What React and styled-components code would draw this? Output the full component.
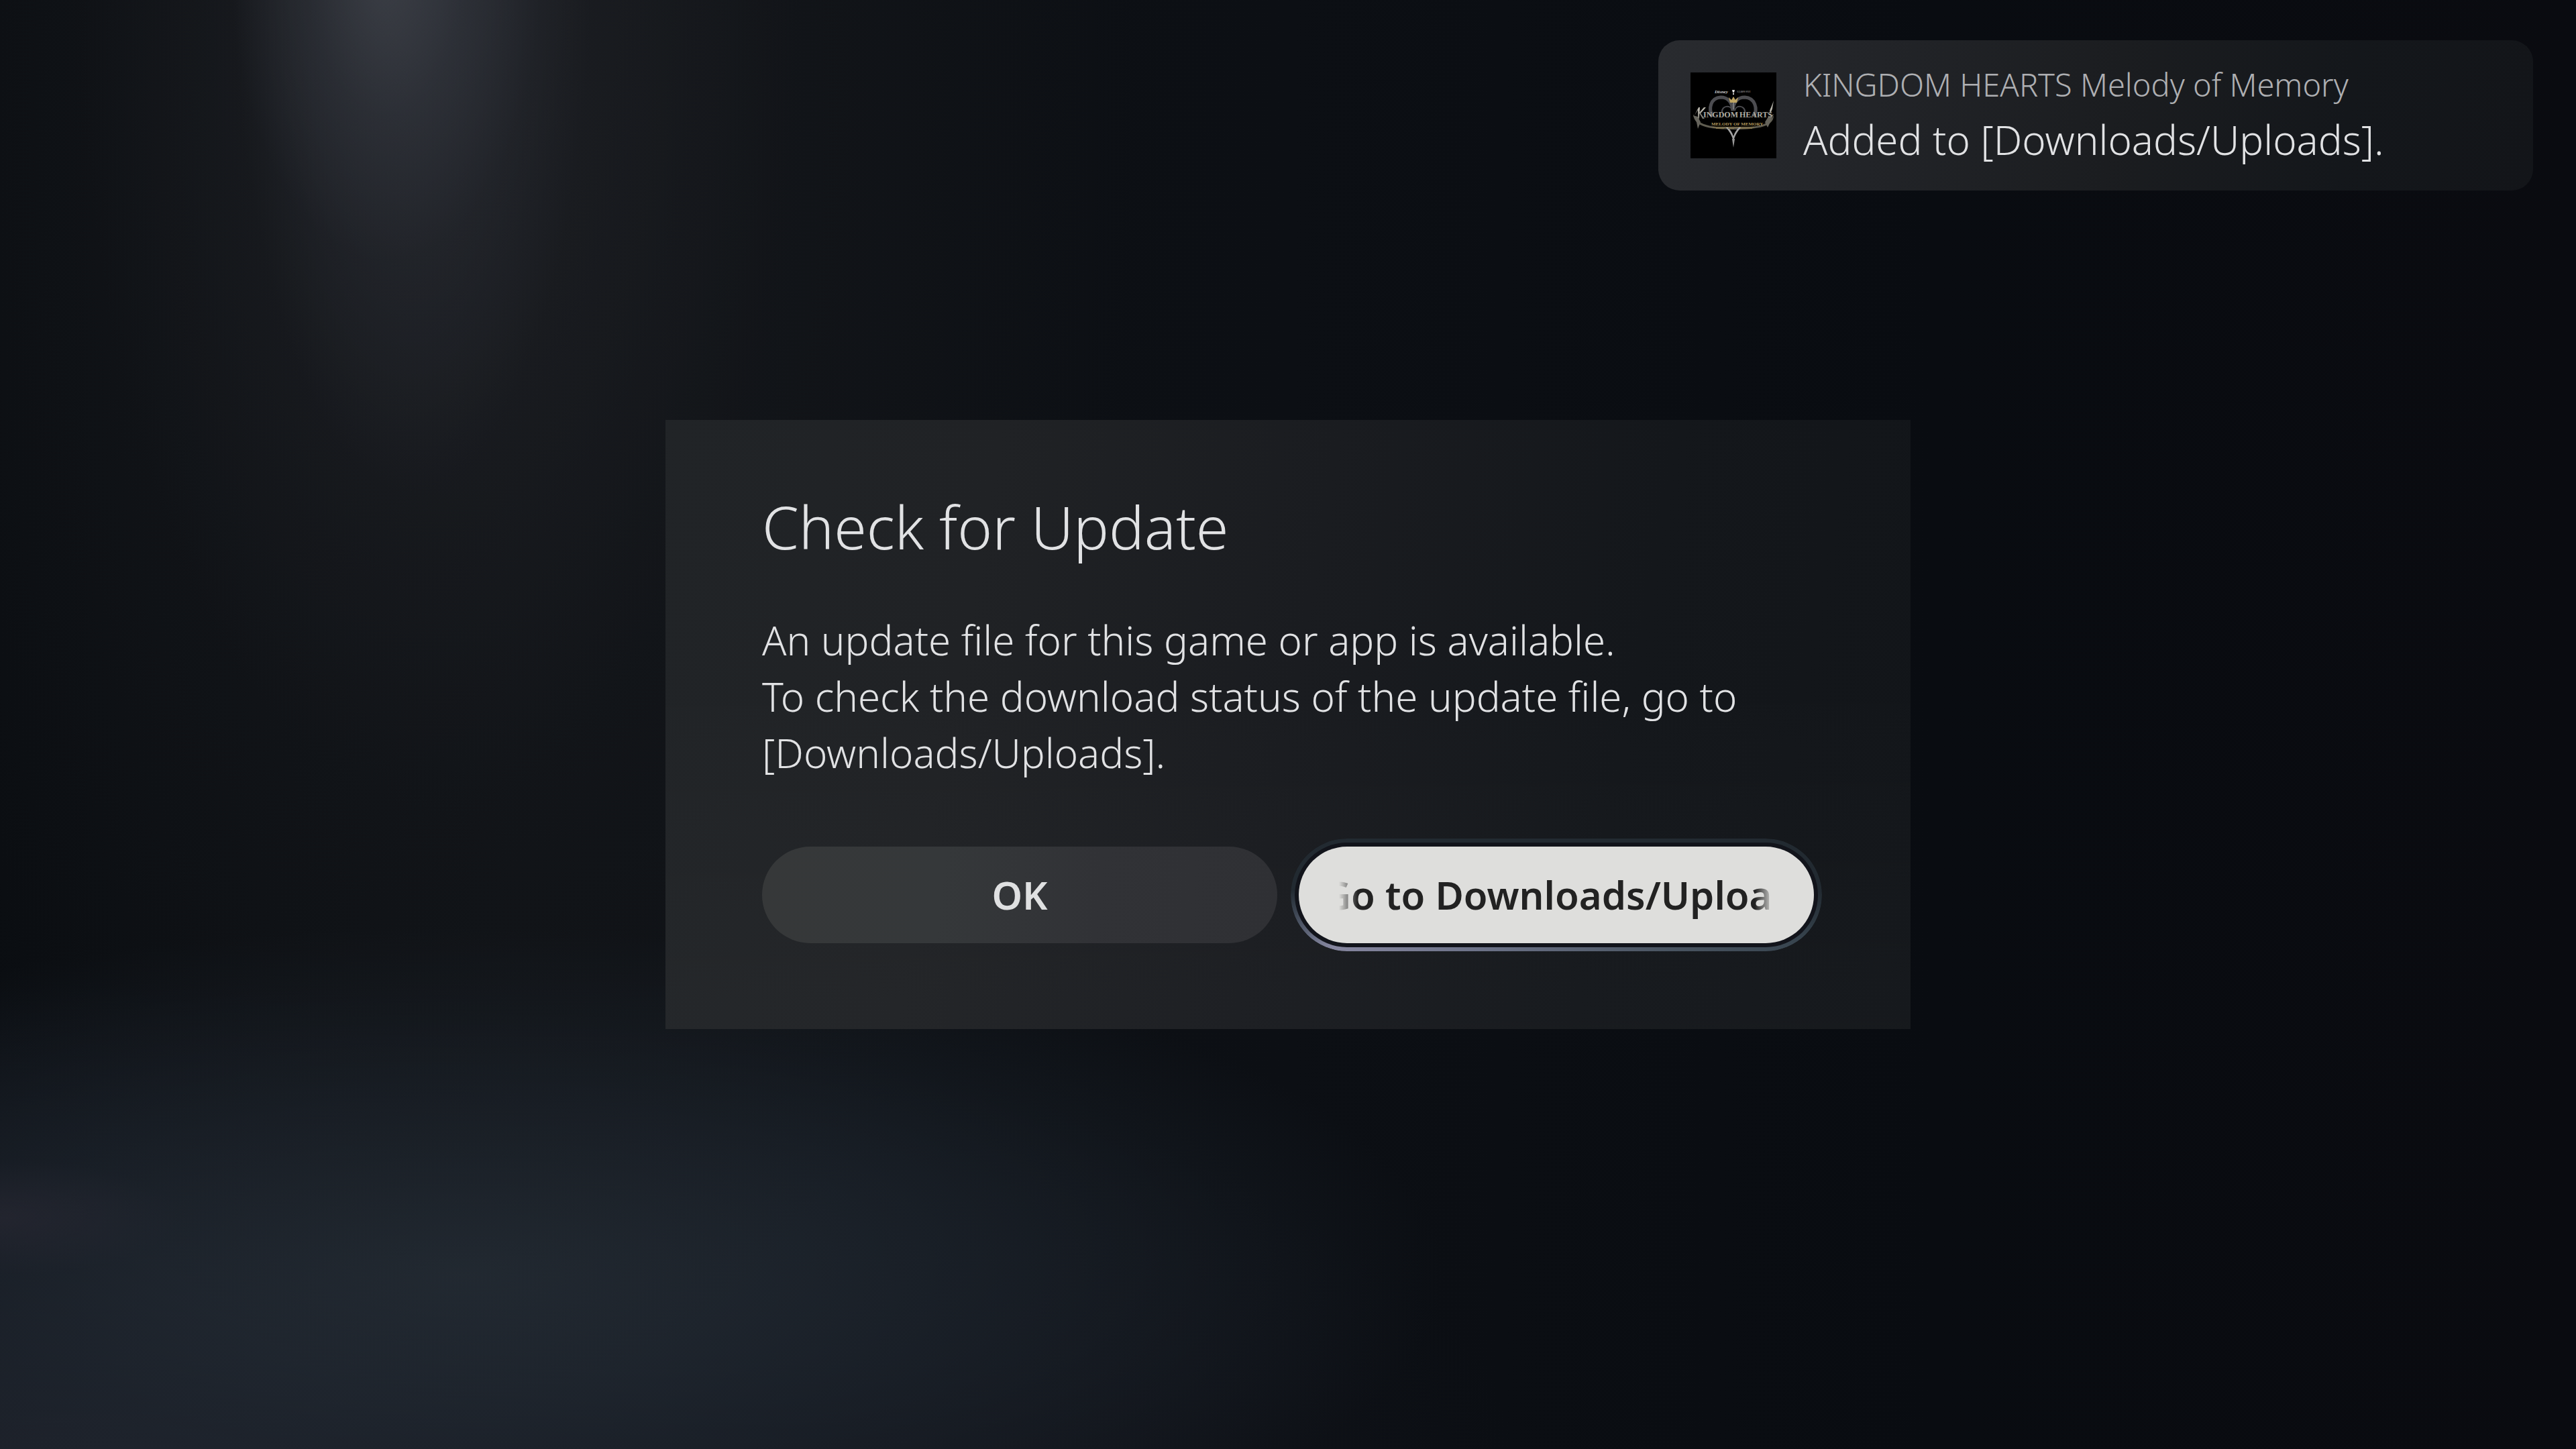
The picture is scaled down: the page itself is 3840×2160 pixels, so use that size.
import React from "react";
import styled, { createGlobalStyle, css } from "styled-components";

const GlobalStyle = createGlobalStyle`
  *, *::before, *::after { box-sizing: border-box; }
  body {
    margin: 0;
    background: #090c11;
    color: #e1e2e4;
    font-family: "Noto Sans", "Open Sans", sans-serif;
    font-weight: 300;
  }
  h1, h2, p { margin: 0; font-weight: inherit; }
`;

const Screen = styled.main`
  position: relative;
  min-height: 100vh;
  display: grid;
  place-items: center;
  overflow: hidden;
  background:
    radial-gradient(ellipse 7% 4% at 0% 84%, rgba(44, 42, 54, 0.5), rgba(44, 42, 54, 0)),
    radial-gradient(ellipse 6% 20% at 15% -2%, rgba(78, 82, 90, 0.5), rgba(60, 64, 72, 0.3) 50%, rgba(50, 54, 62, 0)),
    radial-gradient(ellipse 7% 38% at 16% -4%, rgba(46, 49, 57, 0.6) 20%, rgba(40, 43, 50, 0.4) 65%, rgba(36, 39, 46, 0)),
    radial-gradient(ellipse 14% 58% at 17% -2%, rgba(36, 38, 44, 0.5), rgba(32, 35, 44, 0)),
    radial-gradient(ellipse 26% 90% at 18% 8%, rgba(30, 31, 34, 0.6), rgba(24, 26, 30, 0.4) 50%, rgba(20, 22, 26, 0)),
    radial-gradient(ellipse 38% 24% at 18% 88%, rgba(38, 47, 56, 0.8), rgba(30, 38, 47, 0.6) 50%, rgba(20, 26, 36, 0)),
    radial-gradient(ellipse 54% 34% at 5% 102%, rgba(34, 36, 46, 0.9), rgba(26, 28, 38, 0.5) 50%, rgba(20, 24, 34, 0)),
    linear-gradient(90deg, #0a0d11 0%, #0e1115 20%, #0c0f14 50%, #090c11 75%, #0a0b10 100%);
`;

const Toast = styled.aside`
  position: absolute;
  top: 60px;
  right: 64px;
  width: 1304px;
  max-width: calc(100% - 128px);
  min-height: 224px;
  padding: 0 48px;
  display: flex;
  align-items: center;
  gap: 40px;
  border-radius: 32px;
  background: linear-gradient(98deg, #292b2f 0%, #222428 25%, #1b1d20 52%, #14171b 78%, #131519 100%);
`;

const Artwork = styled.svg`
  width: 128px;
  height: 128px;
  flex: none;
  background: #000;
`;

const ToastText = styled.div`
  display: grid;
  gap: 16px;
  white-space: nowrap;
`;

const ToastTitle = styled.p`
  font-size: 47px;
  line-height: 56px;
  color: #aeafb2;
`;

const ToastMessage = styled.p`
  font-size: 60px;
  line-height: 76px;
`;

const Dialog = styled.section`
  width: 1856px;
  max-width: calc(100% - 128px);
  padding: 100px 144px 128px;
  background:
    linear-gradient(180deg, transparent 40%, rgba(255, 255, 255, 0.02)),
    linear-gradient(100deg, #212427 0%, #202225 25%, #1a1c20 50%, #14171b 75%, #121519 100%);
`;

const Heading = styled.h1`
  font-size: 88px;
  line-height: 118px;
`;

const Message = styled.p`
  margin-top: 68px;
  font-size: 60px;
  line-height: 84px;
`;

const Actions = styled.div`
  margin-top: 98px;
  display: grid;
  grid-template-columns: 1fr 1fr;
  gap: 32px;
`;

const focusRing = css`
  &::before {
    content: "";
    position: absolute;
    inset: -12px;
    padding: 6px;
    border-radius: 84px;
    background:
      linear-gradient(180deg, #222a31 0%, #222a31 45%, transparent 92%),
      linear-gradient(90deg, #5a6478 0%, #86869f 8%, #6c7288 35%, #4a5562 70%, #35424c 100%);
    mask: linear-gradient(#000 0 0) content-box exclude, linear-gradient(#000 0 0);
  }
  &::after {
    content: "";
    position: absolute;
    inset: -6px;
    z-index: -1;
    border-radius: 78px;
    background: #12141b;
  }
`;

const Button = styled.button`
  position: relative;
  isolation: isolate;
  height: 144px;
  min-width: 0;
  padding: 0;
  border: 0;
  border-radius: 72px;
  outline: 0;
  font: 600 58px/84px "Noto Sans", "Open Sans", sans-serif;
  color: #dfe0e1;
  background: linear-gradient(95deg, #363839 0%, #35383a 35%, #313236 65%, #2f3034 100%);
  cursor: pointer;

  ${(p) => p.$focused && css`
    color: #222222;
    background: none;
    ${focusRing}
  `}
`;

const Face = styled.span`
  height: 100%;
  padding: 0 60px;
  display: flex;
  align-items: center;
  border-radius: 72px;
  background: #dededc;
`;

const Marquee = styled.span`
  flex: 1;
  min-width: 0;
  overflow: hidden;
  text-align: left;
  white-space: nowrap;
  text-indent: ${(p) => -p.$scrolled}px;
  mask-image: linear-gradient(90deg, transparent, #000 28px, #000 calc(100% - 28px), transparent);
`;

function GameArtwork() {
  return (
    <Artwork viewBox="0 0 128 128" role="img" aria-label="KINGDOM HEARTS Melody of Memory">
      <defs>
        <linearGradient id="silver" x1="0" y1="0" x2="0" y2="1">
          <stop offset="0" stopColor="#8b8a84" />
          <stop offset="0.5" stopColor="#bdbab0" />
          <stop offset="1" stopColor="#77756b" />
        </linearGradient>
      </defs>
      <text x="36" y="31" fontFamily="Liberation Serif, serif" fontStyle="italic" fontWeight="700" fontSize="7" fill="#d0d0d0">Disney</text>
      <path d="M62 26h4l-1 4h-2zM63 31h2v2h-2z" fill="#dcdcdc" />
      <text x="69" y="30" fontFamily="Liberation Sans, sans-serif" fontSize="3" fill="#9a9a9a">SQUARE ENIX</text>
      <g fill="none" stroke="#4c4c50">
        <path d="M33 66C26 54 30 38 45 37c10 0 17 7 18 20 1-13 8-20 18-20 15 1 20 17 13 29" strokeWidth="5" />
        <path d="M47 59c-1-9 13-12 15-2M81 59c1-9-13-12-15-2" strokeWidth="2" />
      </g>
      <path d="M4 62c6 16 25 20 60 20s53-3 60-18c0 16-21 21-60 21S5 80 4 62z" fill="#5f5c50" />
      <path d="M4 64l7 2 4 8-4 10-2-10zM124 62l-8 4-5 8 4 8 4-8z" fill="#66645c" />
      <path d="M52 81c5 6 10 12 12 22 2-10 7-16 12-22l-3 0c-4 4-7 8-9 14-2-6-5-10-9-14z" fill="#a5a5a5" />
      <path d="M62 99l2 13 2-13z" fill="#989898" />
      <path d="M57 37l4 4 3-5 3 5 4-4-2 8H59z" fill="#bfa562" />
      <path d="M63 45h2v10h-2z" fill="#77777a" />
      <path d="M7 62l5-10 2 0-1 17-2-1 0-12-5 8zM13 60l7-8 3 0-8 9 6 8-3 0zM118 57l6-15-2 12-3 8z" fill="url(#silver)" />
      <g fontFamily="Liberation Serif, serif" fontWeight="700" fontSize="12" fill="url(#silver)">
        <text x="19" y="67">INGDOM</text>
        <text x="73" y="67">HEARTS</text>
      </g>
      <text x="31" y="79" fontFamily="Liberation Serif, serif" fontWeight="700" fontSize="7" fill="#b39a5c">MELODY OF MEMORY</text>
      <path d="M33 81h62v1H33zM38 83h12v1H38zM56 83h9v1h-9zM74 83h18v1H74z" fill="#8d7a4b" />
    </Artwork>
  );
}

export default function App() {
  return (
    <>
      <GlobalStyle />
      <Screen>
        <Toast role="status">
          <GameArtwork />
          <ToastText>
            <ToastTitle>KINGDOM HEARTS Melody of Memory</ToastTitle>
            <ToastMessage>Added to [Downloads/Uploads].</ToastMessage>
          </ToastText>
        </Toast>

        <Dialog role="dialog" aria-labelledby="dialog-title" aria-describedby="dialog-message">
          <Heading id="dialog-title">Check for Update</Heading>
          <Message id="dialog-message">
            An update file for this game or app is available.
            <br />
            To check the download status of the update file, go to [Downloads/Uploads].
          </Message>
          <Actions>
            <Button type="button">OK</Button>
            <Button type="button" $focused>
              <Face>
                <Marquee $scrolled={24}>Go to Downloads/Uploads</Marquee>
              </Face>
            </Button>
          </Actions>
        </Dialog>
      </Screen>
    </>
  );
}
